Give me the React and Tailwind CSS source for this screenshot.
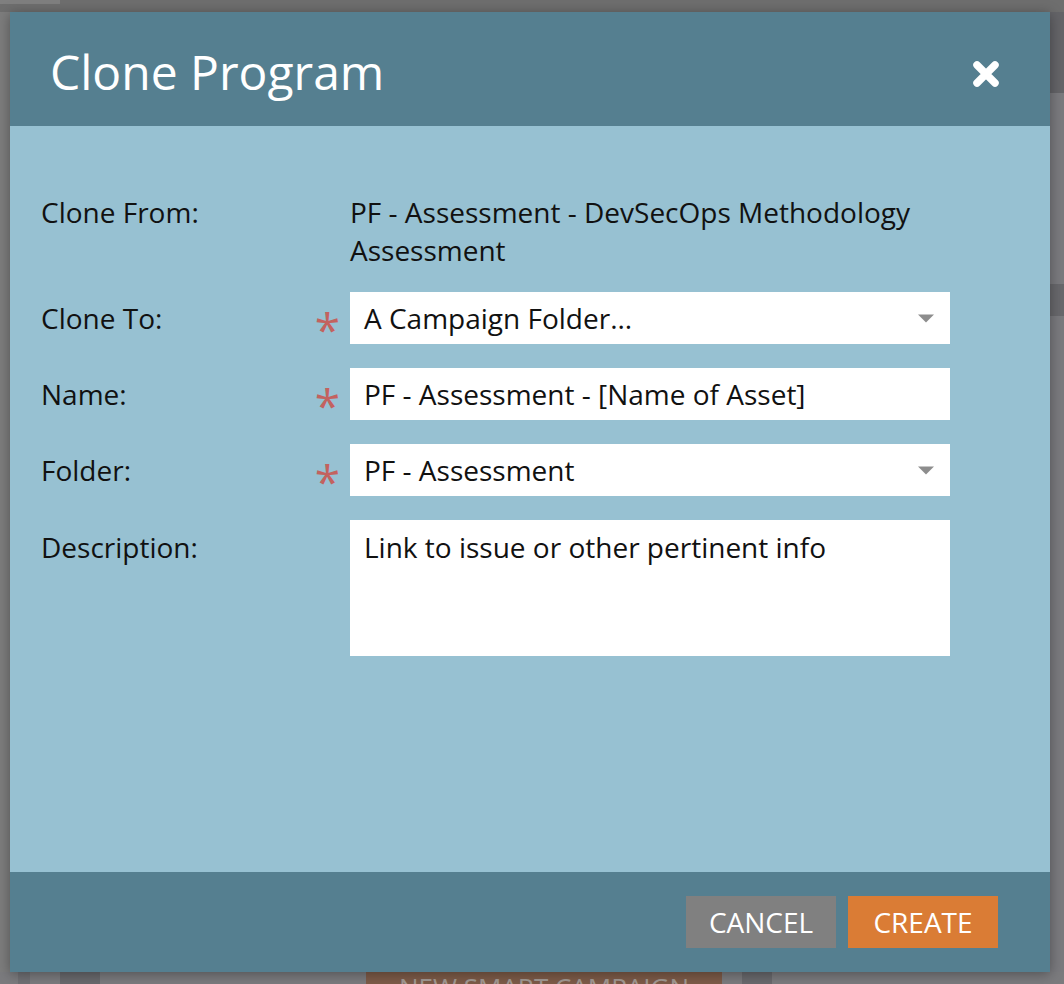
import React from "react";

function Caret() {
  return (
    <svg width="16" height="9" viewBox="0 0 16 9" className="shrink-0">
      <polygon points="0,0.5 16,0.5 8,8.5" fill="#8d8d8d" />
    </svg>
  );
}

function Star() {
  return (
    <span className="text-[46px] leading-none text-[#c3625f] translate-y-[11px] select-none">*</span>
  );
}

function Field({ label, value, required, caret }) {
  return (
    <div className="flex">
      <div className="w-[309px] h-[52px] flex items-center justify-between pr-[10px]">
        <span className="text-[28px] text-[#111]">{label}</span>
        {required && <Star />}
      </div>
      <div className="w-[600px] h-[52px] bg-white flex items-center justify-between pl-[14px] pr-[16px]">
        <span className="text-[28px] text-[#111] whitespace-nowrap">{value}</span>
        {caret && <Caret />}
      </div>
    </div>
  );
}

export default function App() {
  return (
    <div className="relative w-[1064px] h-[984px] overflow-hidden bg-[#7b7b7e] flex flex-col font-['Open_Sans',sans-serif]">
      {/* page behind the overlay */}
      <div className="h-[12px] bg-[#6e6e6e] shrink-0">
        <div className="w-[60px] h-[4px] bg-[#7f7f7f]" />
      </div>
      <div className="flex-1 flex">
        <div className="w-[10px] bg-[#7d7d7d]" />
        <div className="flex-1" />
        <div className="w-[14px] flex flex-col">
          <div className="h-[81px] bg-[#646468]" />
          <div className="h-[191px] bg-[#7a7a7e]" />
          <div className="h-[32px] bg-[#68686c]" />
          <div className="flex-1 bg-[#7a7a7e]" />
        </div>
      </div>
      <div className="h-[12px] shrink-0 flex overflow-hidden">
        <div className="w-[18px] bg-[#7b7b7e]" />
        <div className="w-[12px] bg-[#707074]" />
        <div className="w-[30px] bg-[#7b7b7e]" />
        <div className="w-[40px] bg-[#69696d]" />
        <div className="w-[266px] bg-[#7b7b7e]" />
        <div className="w-[356px] h-[40px] bg-[#7d5b48] flex justify-center pt-[2px]">
          <span className="text-[26px] leading-none text-[#a39a94] whitespace-nowrap">NEW SMART CAMPAIGN</span>
        </div>
        <div className="w-[20px] bg-[#7b7b7e]" />
        <div className="w-[30px] bg-[#69696d]" />
        <div className="flex-1 bg-[#7b7b7e]" />
      </div>

      {/* modal dialog */}
      <div className="absolute left-[10px] top-[12px] w-[1040px] h-[960px] flex flex-col shadow-[0_2px_12px_rgba(0,0,0,0.35)]">
        <div className="h-[114px] shrink-0 bg-[#557f90] flex items-center justify-between pl-[40px] pr-[50px]">
          <h1 className="text-[48px] leading-none text-white pt-[5px]">Clone Program</h1>
          <svg width="28" height="28" viewBox="0 0 28 28" className="mt-[10px]">
            <path d="M5 5 L23 23 M23 5 L5 23" stroke="white" strokeWidth="7.5" strokeLinecap="round" />
          </svg>
        </div>
        <div className="flex-1 bg-[#97c1d2] pt-[67px] pl-[31px]">
          <div className="flex">
            <div className="w-[309px] text-[28px] leading-[38px] text-[#111]">Clone From:</div>
            <div className="w-[600px] text-[28px] leading-[38px] text-[#111]">
              PF - Assessment - DevSecOps Methodology Assessment
            </div>
          </div>
          <div className="mt-[23px] flex flex-col gap-[24px]">
            <Field label="Clone To:" value="A Campaign Folder..." required caret />
            <Field label="Name:" value="PF - Assessment - [Name of Asset]" required />
            <Field label="Folder:" value="PF - Assessment" required caret />
            <div className="flex">
              <div className="w-[309px] pt-[8px] text-[28px] leading-[38px] text-[#111]">Description:</div>
              <div className="w-[600px] h-[136px] bg-white pl-[14px] pt-[8px] text-[28px] leading-[38px] text-[#111]">
                Link to issue or other pertinent info
              </div>
            </div>
          </div>
        </div>
        <div className="h-[100px] shrink-0 bg-[#557f90] flex items-center justify-end pr-[52px] gap-[12px]">
          <button className="w-[150px] h-[52px] bg-[#808080] text-white text-[28px] leading-none">CANCEL</button>
          <button className="w-[150px] h-[52px] bg-[#da7c35] text-white text-[28px] leading-none">CREATE</button>
        </div>
      </div>
    </div>
  );
}
